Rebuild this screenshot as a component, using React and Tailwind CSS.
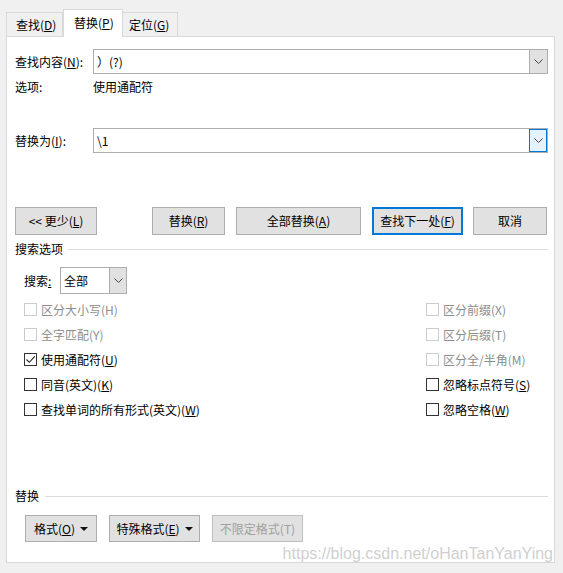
import React from 'react';

const font = { fontFamily: '"Noto Sans CJK SC", "Microsoft YaHei", sans-serif' };

const Chevron = () => (
  <svg width="9" height="5" viewBox="0 0 9 5" fill="none">
    <path d="M0.5 0.5 L4.5 4.5 L8.5 0.5" stroke="#444" strokeWidth="1" />
  </svg>
);

const Caret = () => (
  <svg width="8" height="4" viewBox="0 0 8 4" className="ml-[5px]">
    <path d="M0 0 L8 0 L4 4 Z" fill="#111" />
  </svg>
);

const Check = () => (
  <svg width="11" height="11" viewBox="0 0 11 11" fill="none">
    <path d="M1.5 5.5 L4.3 8.3 L9.8 2.3" stroke="#222" strokeWidth="1.1" />
  </svg>
);

const Btn = ({ w, primary, disabled, children }) => (
  <div
    className={`flex items-center justify-center bg-[#e1e1e1] ${
      primary ? 'border-2 border-[#0078d7]' : disabled ? 'border border-[#bfbfbf] text-[#a0a0a0]' : 'border border-[#adadad]'
    } ${w}`}
  >
    {children}
  </div>
);

const CheckRow = ({ label, checked, disabled }) => (
  <div className="h-[25px] flex items-center">
    <div
      className={`w-[13px] h-[13px] border flex items-center justify-center bg-white ${
        disabled ? 'border-[#cccccc]' : 'border-[#333333]'
      }`}
    >
      {checked && <Check />}
    </div>
    <span className={`ml-[4px] ${disabled ? 'text-[#8d8d8d]' : ''}`}>{label}</span>
  </div>
);

const Combo = ({ value, focused }) => (
  <div className="flex-1 h-[25px] border border-[#adadad] flex bg-white">
    <div className="flex-1 flex items-center pl-[3px]">{value}</div>
    <div
      className={`w-[18px] flex items-center justify-center ${
        focused ? 'border border-[#0078d7] bg-[#e5f1fb]' : 'border-l border-[#adadad] bg-[#e1e1e1]'
      }`}
    >
      <Chevron />
    </div>
  </div>
);

export default function App() {
  return (
    <div className="w-[563px] h-[573px] bg-[#f0f0f0] pt-[9px] pl-[6px] text-[12px] leading-[16px] text-black" style={font}>
      {/* tabs */}
      <div className="flex items-end h-[28px]">
        <div className="w-[57px] h-[25px] border border-b-0 border-[#d9d9d9] bg-[#f0f0f0] pl-[9px] flex items-center">
          查找(<u>D</u>)
        </div>
        <div className="relative z-10 w-[60px] h-[28px] border border-b-0 border-[#d9d9d9] bg-white pl-[10px] flex items-center pb-[2px]">
          替换(<u>P</u>)
        </div>
        <div className="w-[55px] h-[25px] border border-b-0 border-l-0 border-[#d9d9d9] bg-[#f0f0f0] pl-[6px] flex items-center">
          定位(<u>G</u>)
        </div>
      </div>

      {/* panel */}
      <div className="relative -mt-[1px] w-[549px] h-[527px] border border-[#d9d9d9] bg-white pl-[8px] pr-[6px]">
        <div className="mt-[12px] flex items-center">
          <div className="w-[78px]">查找内容(<u>N</u>):</div>
          <Combo value="）(?)" />
        </div>
        <div className="mt-[6px] flex items-center h-[14px]">
          <div className="w-[78px]">选项:</div>
          <div>使用通配符</div>
        </div>
        <div className="mt-[34px] flex items-center">
          <div className="w-[78px]">替换为(<u>I</u>):</div>
          <Combo value="\1" focused />
        </div>

        <div className="mt-[54px] flex h-[28px]">
          <Btn w="w-[82px]">&lt;&lt; 更少(<u>L</u>)</Btn>
          <div className="ml-[55px]">
            <Btn w="w-[73px] h-full">替换(<u>R</u>)</Btn>
          </div>
          <div className="ml-[11px]">
            <Btn w="w-[125px] h-full">全部替换(<u>A</u>)</Btn>
          </div>
          <div className="ml-[11px]">
            <Btn w="w-[91px] h-full" primary>查找下一处(<u>F</u>)</Btn>
          </div>
          <div className="ml-[10px]">
            <Btn w="w-[74px] h-full">取消</Btn>
          </div>
        </div>

        <div className="mt-[6px] flex items-center h-[16px]">
          <span>搜索选项</span>
          <div className="flex-1 ml-[5px] h-px bg-[#dcdcdc]" />
        </div>

        <div className="mt-[10px] ml-[9px] flex items-center h-[27px]">
          <div className="w-[36px]">搜索<u>:</u></div>
          <div className="w-[67px] h-[27px] border border-[#adadad] flex">
            <div className="flex-1 flex items-center pl-[3px]">全部</div>
            <div className="w-[17px] border-l border-[#adadad] bg-[#e1e1e1] flex items-center justify-center">
              <Chevron />
            </div>
          </div>
        </div>

        <div className="mt-[3px] ml-[9px] flex">
          <div className="w-[402px]">
            <CheckRow label="区分大小写(H)" disabled />
            <CheckRow label="全字匹配(Y)" disabled />
            <CheckRow label={<>使用通配符(<u>U</u>)</>} checked />
            <CheckRow label={<>同音(英文)(<u>K</u>)</>} />
            <CheckRow label={<>查找单词的所有形式(英文)(<u>W</u>)</>} />
          </div>
          <div>
            <CheckRow label="区分前缀(X)" disabled />
            <CheckRow label="区分后缀(T)" disabled />
            <CheckRow label="区分全/半角(M)" disabled />
            <CheckRow label={<>忽略标点符号(<u>S</u>)</>} />
            <CheckRow label={<>忽略空格(<u>W</u>)</>} />
          </div>
        </div>

        <div className="mt-[66px] flex items-center h-[16px]">
          <span>替换</span>
          <div className="flex-1 ml-[6px] h-px bg-[#dcdcdc]" />
        </div>

        <div className="mt-[11px] ml-[10px] flex gap-[12px] h-[27px]">
          <Btn w="w-[72px]">格式(<u>O</u>)<Caret /></Btn>
          <Btn w="w-[91px]">特殊格式(<u>E</u>)<Caret /></Btn>
          <Btn w="w-[91px]" disabled>不限定格式(T)</Btn>
        </div>

        <div
          className="absolute right-[1px] bottom-[-2px] text-[16px] leading-[20px] text-[#d0d0d0]"
          style={{ fontFamily: '"Liberation Sans", Arial, sans-serif' }}
        >
          https://blog.csdn.net/oHanTanYanYing
        </div>
      </div>
    </div>
  );
}
